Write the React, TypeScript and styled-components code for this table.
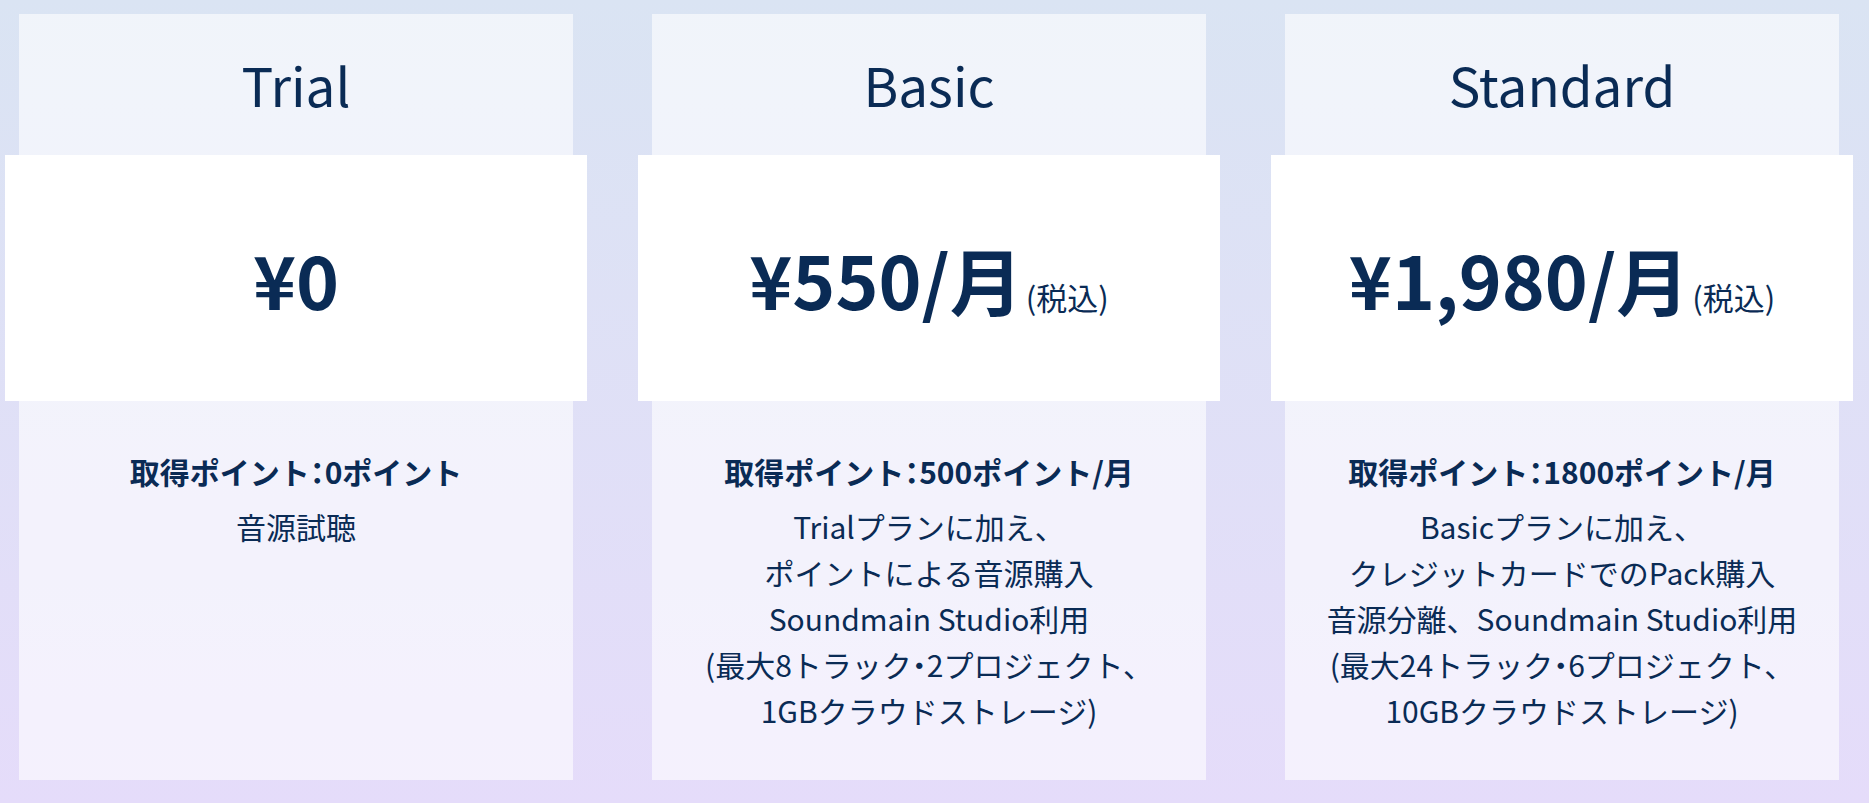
import React from 'react';
import styled, { createGlobalStyle } from 'styled-components';

const GlobalStyle = createGlobalStyle`
  html, body {
    margin: 0;
    padding: 0;
  }
  body {
    font-family: "Noto Sans CJK JP", "Noto Sans", sans-serif;
    color: #0a2b55;
  }
`;

const Page = styled.div`
  min-height: 100vh;
  box-sizing: border-box;
  padding: 14px 0 0 19px;
  background: linear-gradient(180deg, #dae4f3 0%, #e5dcfa 100%);
`;

const Row = styled.div`
  display: flex;
  gap: 79px;
`;

const Card = styled.div`
  width: 554px;
  display: flex;
  flex-direction: column;
  background: rgba(255, 255, 255, 0.6);
`;

const Head = styled.div`
  height: 141px;
  display: flex;
  align-items: center;
  justify-content: center;
  font-size: 53px;
  font-weight: 400;
  line-height: 1;
`;

const PriceBox = styled.div`
  height: 246px;
  margin: 0 -14px;
  background: #fff;
  display: flex;
  align-items: center;
  justify-content: center;
`;

const Price = styled.div`
  font-size: 73px;
  font-weight: 700;
  line-height: 1;
`;

const Tax = styled.span`
  font-size: 31px;
  font-weight: 400;
  margin-left: 3px;
`;

const Body = styled.div`
  flex: 1;
  padding: 47px 20px;
  text-align: center;
  font-size: 30px;
  line-height: 46px;
`;

const Points = styled.div`
  font-weight: 700;
  margin-bottom: 9px;
`;

const Line = styled.div``;

// half-width punctuation (colon, middle dot)
const Half = styled.span`
  font-feature-settings: 'halt';
`;

type Plan = {
  name: string;
  price: string;
  monthly: boolean;
  points: string;
  desc: string[];
};

const plans: Plan[] = [
  {
    name: 'Trial',
    price: '¥0',
    monthly: false,
    points: '取得ポイント：0ポイント',
    desc: ['音源試聴'],
  },
  {
    name: 'Basic',
    price: '¥550/月',
    monthly: true,
    points: '取得ポイント：500ポイント/月',
    desc: [
      'Trialプランに加え、',
      'ポイントによる音源購入',
      'Soundmain Studio利用',
      '(最大8トラック・2プロジェクト、',
      '1GBクラウドストレージ)',
    ],
  },
  {
    name: 'Standard',
    price: '¥1,980/月',
    monthly: true,
    points: '取得ポイント：1800ポイント/月',
    desc: [
      'Basicプランに加え、',
      'クレジットカードでのPack購入',
      '音源分離、Soundmain Studio利用',
      '(最大24トラック・6プロジェクト、',
      '10GBクラウドストレージ)',
    ],
  },
];

const punct = (text: string) =>
  text.split(/([：・])/).map((part, i) =>
    part === '：' || part === '・' ? <Half key={i}>{part}</Half> : part
  );

export default function App() {
  return (
    <>
      <GlobalStyle />
      <Page>
        <Row>
          {plans.map((p) => (
            <Card key={p.name}>
              <Head>{p.name}</Head>
              <PriceBox>
                <Price>
                  {p.price}
                  {p.monthly && <Tax>(税込)</Tax>}
                </Price>
              </PriceBox>
              <Body>
                <Points>{punct(p.points)}</Points>
                {p.desc.map((line) => (
                  <Line key={line}>{punct(line)}</Line>
                ))}
              </Body>
            </Card>
          ))}
        </Row>
      </Page>
    </>
  );
}
